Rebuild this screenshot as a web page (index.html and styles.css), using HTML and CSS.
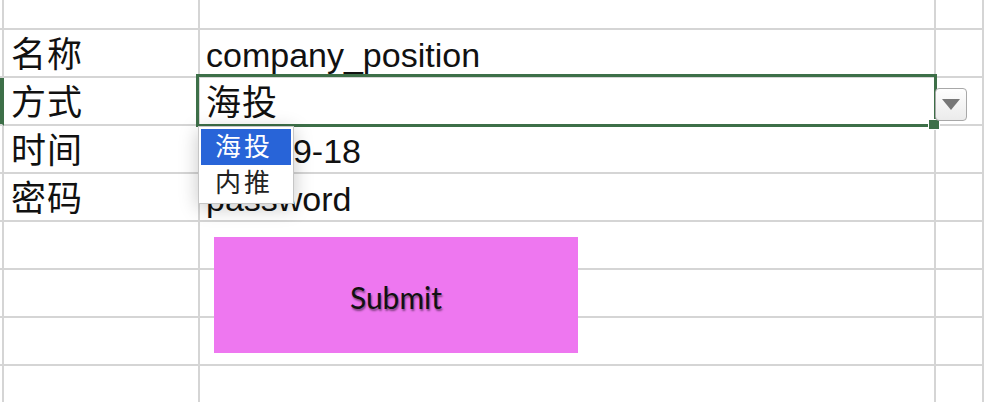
FILE: index.html
```html
<!DOCTYPE html>
<html lang="zh">
<head>
<meta charset="utf-8">
<title>Sheet</title>
<link rel="stylesheet" href="styles.css">
</head>
<body>
<div class="sheet">
  <div class="c hdr"></div><div class="c a"></div><div class="c b"></div><div class="c"></div>

  <div class="c hdr"></div><div class="c a">名称</div><div class="c b">company_position</div><div class="c"></div>

  <div class="c hdr on"></div><div class="c a">方式</div>
  <div class="c b sel"><span class="cjk">海投</span>
    <span class="handle"></span>
    <span class="drop-btn"><svg width="18" height="11" viewBox="0 0 18 11"><polygon points="0,0 18,0 9,11" fill="#777"/></svg></span>
    <div class="menu">
      <div class="item active">海投</div>
      <div class="item">内推</div>
    </div>
  </div>
  <div class="c"></div>

  <div class="c hdr"></div><div class="c a">时间</div><div class="c b">2019-9-18</div><div class="c"></div>

  <div class="c hdr"></div><div class="c a">密码</div><div class="c b">password</div><div class="c"></div>

  <div class="c hdr"></div><div class="c a"></div><div class="c b"></div><div class="c"></div>
  <div class="c hdr"></div><div class="c a"></div><div class="c b"></div><div class="c"></div>
  <div class="c hdr"></div><div class="c a"></div><div class="c b"></div><div class="c"></div>
  <div class="c hdr"></div><div class="c a"></div><div class="c b"></div><div class="c"></div>
</div>
<div class="shape">Submit</div>
</body>
</html>
```
FILE: styles.css
```css
* { box-sizing: border-box; }
html, body {
  margin: 0;
  height: 100%;
  overflow: hidden;
  background: #fff;
}
body {
  font-family: "Liberation Sans", "Noto Sans CJK SC", sans-serif;
  color: #111;
  position: relative;
}
.sheet {
  display: grid;
  grid-template-columns: 4px 196px 736px 1fr;
  grid-template-rows: 30px repeat(8, 48px);
}
.c {
  border-right: 2px solid #d5d5d5;
  border-bottom: 2px solid #d5d5d5;
  font-size: 34px;
  line-height: 42px;
  padding-top: 4px;
  white-space: nowrap;
}
.hdr.on {
  background: #3d6f48;
  border-right-color: #3d6f48;
}
.a { padding-left: 7px; font-size: 35px; letter-spacing: 1px; }
.b { padding-left: 6px; }
.cjk { font-size: 35px; letter-spacing: 1px; }
.sel { position: relative; }
.sel::before {
  content: "";
  position: absolute;
  left: -4px;
  top: -4px;
  right: -3px;
  bottom: -3px;
  border: 3px solid #3d6f48;
}
.handle {
  position: absolute;
  left: 728px;
  top: 41px;
  width: 12px;
  height: 11px;
  background: #3d6f48;
  border: 1px solid #fff;
}
.drop-btn {
  position: absolute;
  left: 735px;
  top: 10px;
  width: 32px;
  height: 33px;
  border: 1.5px solid #a8a8a8;
  border-radius: 4px;
  background: linear-gradient(#fefefe, #ebebeb);
  display: flex;
  align-items: center;
  justify-content: center;
}
.menu {
  position: absolute;
  left: -2px;
  top: 48px;
  width: 96px;
  height: 78px;
  padding: 2px;
  background: #fff;
  border: 1px solid #c6c6c6;
  box-shadow: 0 4px 18px rgba(0, 0, 0, 0.22);
  z-index: 3;
}
.item {
  height: 36px;
  display: flex;
  align-items: center;
  padding-left: 14px;
  font-size: 26px;
  letter-spacing: 3px;
  color: #222;
}
.item.active {
  background: #2864d8;
  color: #fff;
}
.shape {
  position: absolute;
  left: 214px;
  top: 237px;
  width: 364px;
  height: 116px;
  background: #ee77f0;
  display: flex;
  align-items: center;
  justify-content: center;
  font-family: Lato, "Open Sans", sans-serif;
  font-size: 30px;
  color: #111;
  text-shadow: 1px 2px 2px rgba(0, 0, 0, 0.45);
  padding-top: 4px;
}
```
